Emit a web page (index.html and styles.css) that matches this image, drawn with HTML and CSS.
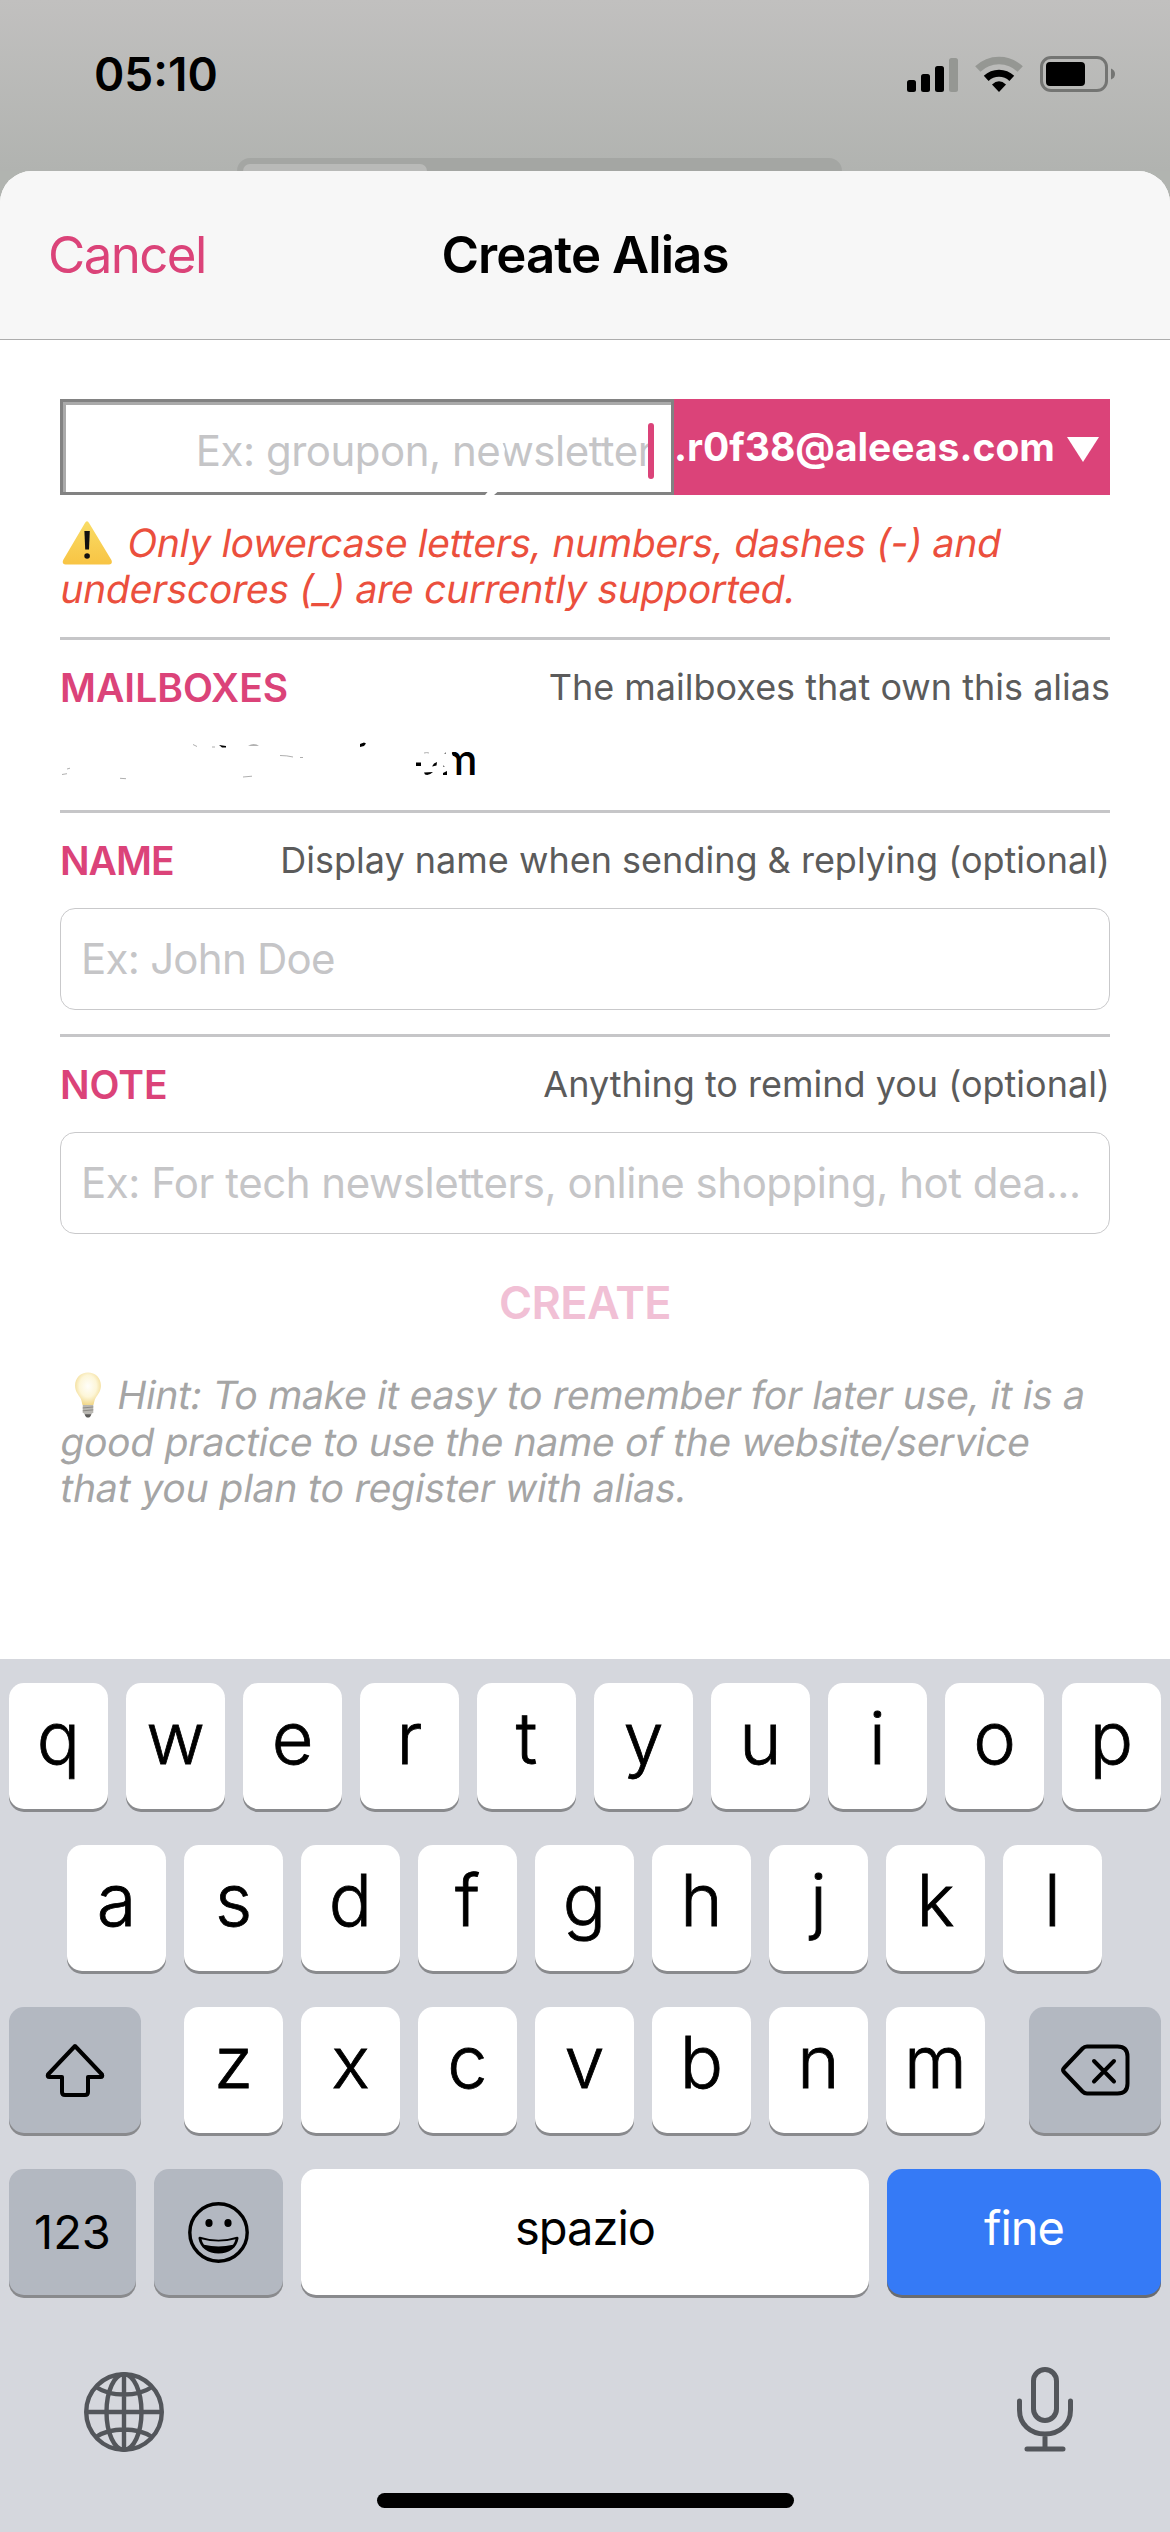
FILE: index.html
```html
<!DOCTYPE html>
<html lang="en">
<head>
<meta charset="utf-8">
<title>Create Alias</title>
<link rel="stylesheet" href="styles.css">
</head>
<body>
<div class="screen">
  <header class="status">
    <span class="clock">05:10</span>
    <div class="status-icons">
      <svg class="signal" width="51" height="36" viewBox="0 0 51 36">
        <rect x="0" y="24" width="9" height="12" rx="2.5"/>
        <rect x="14" y="18" width="9" height="18" rx="2.5"/>
        <rect x="28" y="10" width="9" height="26" rx="2.5"/>
        <rect x="42" y="2" width="9" height="34" rx="2.5" fill="#959793"/>
      </svg>
      <svg class="wifi" width="48" height="36" viewBox="0 0 48 36">
        <path d="M2.800 13.100a30.500 30.500 0 0 1 42.400 0" fill="none" stroke="#959793" stroke-width="7.600"/>
        <path d="M11.200 22.400a18.600 18.600 0 0 1 25.600 0" fill="none" stroke="#000" stroke-width="7"/>
        <path d="M24 36 17 28.600q7-6.600 14 0z"/>
      </svg>
      <svg class="battery" width="76" height="38" viewBox="0 0 76 38">
        <rect x="1.500" y="2.500" width="65" height="33" rx="9.500" fill="none" stroke="#747573" stroke-width="3"/>
        <rect x="6" y="7" width="39" height="24" rx="4"/>
        <path d="M71 13.500q4 1.500 4 5.500t-4 5.500z" fill="#747573"/>
      </svg>
    </div>
    <div class="segmented"><div class="segment"></div></div>
  </header>

  <main class="sheet">
    <nav class="navbar">
      <span class="cancel">Cancel</span>
      <h1 class="title">Create Alias</h1>
    </nav>

    <div class="form">
      <div class="alias">
        <div class="prefix">
          <span>Ex: groupon, newsletter</span>
          <i class="caret"></i>
          <svg class="scratch" width="60" height="96" viewBox="0 0 60 96"><path d="M40 96h9l4-3.500H43zM56 40l4 10-1 8-3-6z" fill="#fff"/></svg>
        </div>
        <div class="suffix">
          <span>.r0f38@aleeas.com</span>
          <svg width="32" height="25" viewBox="0 0 32 25"><path d="M0 0h32L16 25z" fill="#fff"/></svg>
        </div>
      </div>

      <p class="warning">
        <svg class="warn-icon" width="51" height="46" viewBox="0 0 51 46">
          <defs><linearGradient id="wg" x1="0" y1="0" x2="0" y2="1"><stop offset="0" stop-color="#f9dc66"/><stop offset="1" stop-color="#f8c444"/></linearGradient></defs>
          <path d="M22.800 3.200q2.200-4 4.400 0L49.400 40q1.600 4-2.400 4.400H3.600Q-.4 44 1.200 40z" fill="url(#wg)"/>
          <path d="M22.400 11h5.400l-.8 18.500h-3.800z" fill="#111"/><circle cx="25.100" cy="36" r="2.800" fill="#111"/>
        </svg>
        <span class="slant w1">Only lowercase letters, numbers, dashes (-) and</span>
        <span class="slant w2">underscores (_) are currently supported.</span>
      </p>

      <section class="field">
        <div class="row"><b>MAILBOXES</b><span>The mailboxes that own this alias</span></div>
        <div class="mailbox">
          <span>om</span>
          <svg class="scribble" width="420" height="50" viewBox="50 740 420 50">
            <path d="M405 740h46l1 14 4 8v22h-51z" fill="#fff"/>
            <g fill="#000">
              <path d="M219 745l7 1v1.500h-4zM360 747v-3l4-1.500 2 1-2 2.500zM416 762.500h5v3.500h-5zM437 762l-.5 3.500-4.500 1 2-3zM424 772.500l9-.5q-4 4-8 2.500zM443 766.500v-1l2 1zM443 773l4-2v4h-4zM444 753.500l2-1v1z"/>
              <path d="M248 745.500q6-2 11 0z" opacity=".6"/>
            </g>
            <g fill="none" stroke="#999" stroke-width=".8">
              <path d="M62 774.500l5-.8M67 769l3-.8M120 778.300l6 .4M193 744.500l4 2M212 747h3M280 755.500q7 0 13 1.500M300 757.500h3M424 753q3-.8 5 0M243 777l9-.8"/>
            </g>
          </svg>
        </div>
      </section>

      <section class="field">
        <div class="row"><b class="name">NAME</b><span>Display name when sending &amp; replying (optional)</span></div>
        <div class="input john">Ex: John Doe</div>
      </section>

      <section class="field">
        <div class="row"><b>NOTE</b><span>Anything to remind you (optional)</span></div>
        <div class="input">Ex: For tech newsletters, online shopping, hot dea...</div>
      </section>

      <div class="create">CREATE</div>

      <p class="hint">
        <svg class="bulb" width="28" height="48" viewBox="0 0 28 48">
          <defs><radialGradient id="bg" cx=".5" cy=".42" r=".6"><stop offset="0" stop-color="#fffefa"/><stop offset=".55" stop-color="#fdf6d8"/><stop offset="1" stop-color="#f0d584"/></radialGradient></defs>
          <path d="M14 .5C6.500.5.5 6 .5 14c0 6 3 9 5.500 13 1.800 3 1.800 7 2.500 7.500h11c.7-.5.7-4.500 2.500-7.500 2.500-4 5.500-7 5.500-13C27.500 6 21.500.5 14 .5z" fill="url(#bg)"/>
          <path d="M8.500 34.500h11V42l-3 3h-5l-3-3z" fill="#b9b7b2"/>
          <path d="M8.500 37.500l11-1M8.500 40.500l11-1" stroke="#8b8984" stroke-width="1"/>
          <path d="M10.500 44h7q-1 3.500-3.500 3.500T10.500 44z" fill="#5e5d5b"/>
        </svg>
        <span class="slant h1">Hint: To make it easy to remember for later use, it is a</span>
        <span class="slant h2">good practice to use the name of the website/service</span>
        <span class="slant h3">that you plan to register with alias.</span>
      </p>
    </div>
  </main>

  <div class="keyboard">
    <div class="keys">
      <span class="key">q</span><span class="key">w</span><span class="key">e</span><span class="key">r</span><span class="key">t</span><span class="key">y</span><span class="key">u</span><span class="key">i</span><span class="key">o</span><span class="key">p</span>
    </div>
    <div class="keys middle">
      <span class="key">a</span><span class="key">s</span><span class="key">d</span><span class="key">f</span><span class="key">g</span><span class="key">h</span><span class="key">j</span><span class="key">k</span><span class="key">l</span>
    </div>
    <div class="keys third">
      <span class="key dark shift">
        <svg width="60" height="54" viewBox="0 0 60 54"><path d="M30 3 57 31.500q1 2.500-1.500 2.500H43v15q0 3-3 3H20q-3 0-3-3V34H4.500Q2 34 3 31.500z" fill="none" stroke="#000" stroke-width="4" stroke-linejoin="round"/></svg>
      </span>
      <span class="key">z</span><span class="key">x</span><span class="key">c</span><span class="key">v</span><span class="key">b</span><span class="key">n</span><span class="key">m</span>
      <span class="key dark delete">
        <svg width="69" height="52" viewBox="0 0 69 52"><path d="M26 2.500h30.500q10 0 10 10v27q0 10-10 10H26q-2.500 0-4.500-2L3 28q-2-2 0-4L21.500 4.500q2-2 4.500-2zM33 17l20 20.500M53 17 33 37.500" fill="none" stroke="#000" stroke-width="4" stroke-linecap="round" stroke-linejoin="round"/></svg>
      </span>
    </div>
    <div class="keys fourth">
      <span class="key dark num">123</span>
      <span class="key dark emoji">
        <svg width="61" height="61" viewBox="0 0 61 61"><circle cx="30.500" cy="30.500" r="28.700" fill="none" stroke="#000" stroke-width="3.400"/><ellipse cx="21" cy="21" rx="3.600" ry="4"/><ellipse cx="40" cy="21" rx="3.600" ry="4"/><path d="M12 34.800q18.500 6 37 0 1.700-.3 1.500 1.700C49 46 41 51.500 30.500 51.500S12 46 10.500 36.500q-.2-2 1.500-1.700z"/><path d="M13.500 37.200q17 4.600 34 0-.8 3.500-2.500 5.500-14.500 3.500-29 0-1.700-2-2.500-5.500z" fill="#b3b8c1"/></svg>
      </span>
      <span class="key space">spazio</span>
      <span class="key done">fine</span>
    </div>
    <div class="dock">
      <svg width="80" height="80" viewBox="0 0 80 80" fill="none" stroke="#53565b" stroke-width="4.400"><circle cx="40" cy="40" r="37.800"/><ellipse cx="40" cy="40" rx="17.500" ry="37.800"/><path d="M40 2v76M2 40h76M12 15q11 7.500 28 7.500T68 15M12 65q11-7.500 28-7.500T68 65"/></svg>
      <svg class="mic" width="56" height="85" viewBox="0 0 56 85" fill="none" stroke="#53565b" stroke-width="5" stroke-linecap="round"><rect x="16.500" y="2.500" width="23" height="51" rx="11.500"/><path d="M2.500 34v9C2.500 57 13 67 28 67s25.500-10 25.500-24v-9M28 67v15M10 82h36"/></svg>
    </div>
    <div class="home"></div>
  </div>
</div>
</body>
</html>
```
FILE: styles.css
```css
* { box-sizing: border-box; margin: 0; padding: 0; }
body { background: #fff; }
svg { display: block; flex: none; }
.screen {
  width: 1170px; height: 2532px; overflow: hidden;
  display: flex; flex-direction: column;
  font-family: Inter, "Liberation Sans", sans-serif; color: #000;
  background: #b1b4b0;
}

.status {
  position: relative; height: 171px; padding: 0 54px 23px 94px;
  display: flex; justify-content: space-between; align-items: center;
  background: linear-gradient(#c1c0bf, #b1b3b0);
}
.clock { font-size: 46px; font-weight: 600; }
.status-icons { display: flex; align-items: center; }
.signal { margin-right: 17px; }
.wifi { margin-right: 17px; }
.segmented {
  position: absolute; left: 237px; bottom: 0; width: 605px; height: 13px;
  padding: 6px 6px 0; border-radius: 24px 24px 0 0; background: #a4a6a3;
}
.segment { width: 184px; height: 7px; border-radius: 18px 18px 0 0; background: #b9bab8; }

.sheet {
  height: 1488px; background: #fff; border-radius: 32px 32px 0 0;
  overflow: hidden;
}
.navbar {
  height: 169px; background: #f7f7f7; border-bottom: 1px solid #adadad;
  display: grid; grid-template-columns: 1fr auto 1fr; align-items: center;
  padding: 0 47px 2px; font-size: 51px;
}
.cancel { padding-left: 1px; color: #db4379; letter-spacing: -1.6px; }
.title { font-size: 51px; font-weight: 600; letter-spacing: -.93px; }

.form { padding: 59px 60px 0; }
.alias { display: flex; height: 96px; }
.prefix {
  position: relative; width: 614px; padding: 7px 18px 0 0;
  display: flex; align-items: center; justify-content: flex-end;
  border: 3px solid #828282; box-shadow: inset 3px 3px #aaa;
  font-size: 42px; letter-spacing: -.5px; color: #c5c5c7;
}
.caret {
  position: absolute; right: 17px; top: 21px; width: 6px; height: 56px;
  border-radius: 3px; background: #db4379;
}
.scratch { position: absolute; left: 382px; top: -3px; }
.suffix {
  flex: 1; padding: 0 11px 1px 0; display: flex; align-items: center;
  justify-content: space-between; background: #db4379;
  font-size: 39px; font-weight: 700; color: #fff;
}
.suffix svg { margin-top: 6px; }

.slant {
  display: block; white-space: nowrap;
  transform: translateX(-1.5px) skewX(-10deg); transform-origin: 0 37px;
}
.warning {
  display: grid; grid-template-columns: 67px 1fr; margin-top: 25px;
  font-size: 39px; line-height: 46px; letter-spacing: -.25px; color: #eb4f3d;
}
.warn-icon { margin-left: 2px; }
.w2, .h2, .h3 { grid-column: 1 / -1; }

.field { margin-top: 24px; border-top: 3px solid #c6c6c8; padding-top: 23px; }
.warning + .field { margin-top: 25px; }
.row { display: flex; justify-content: space-between; align-items: center; height: 48px; }
.row b { font-size: 39px; font-weight: 600; color: #db4379; }
.row .name { letter-spacing: -1px; }
.row span { font-size: 36px; color: #5b5b5b; }
.mailbox {
  position: relative; height: 99px; margin-bottom: -24px; padding-left: 355px;
  font-size: 42px; font-weight: 500; line-height: 98px;
}
.scribble { position: absolute; left: -10px; top: 29px; }
.input {
  height: 102px; margin-top: 24px; padding-left: 20px; line-height: 99px;
  border: 1px solid #c9c9cb; border-radius: 15px; white-space: nowrap;
  font-size: 42px; letter-spacing: -.47px; color: #c5c5c7;
}
.john { letter-spacing: -.74px; }
.create {
  margin-top: 45px; line-height: 48px; text-align: center;
  font-size: 45px; font-weight: 600; letter-spacing: -.6px; color: #f1c0d5;
}
.hint {
  display: grid; grid-template-columns: 57px 1fr; margin-top: 45px;
  font-size: 39px; line-height: 46.5px; letter-spacing: -.24px; color: #a5a5a5;
}
.h2 { letter-spacing: -.27px; }
.h3 { letter-spacing: -.1px; }
.bulb { margin-left: 14px; height: 46px; overflow: visible; }

.keyboard {
  height: 873px; padding: 24px 9px 0; background: #d5d7dd;
  display: flex; flex-direction: column; gap: 36px;
}
.keys { display: flex; gap: 18px; height: 126px; flex: none; }
.key {
  flex: 1; height: 126px; padding-bottom: 18px; border-radius: 15px;
  display: flex; align-items: center; justify-content: center;
  background: #fff; box-shadow: 0 3px #898a8d;
  font-size: 72px; font-weight: 300; -webkit-text-stroke: .8px currentColor;
}
.middle { padding: 0 59px 0 58px; }
.dark { background: #b3b8c1; padding-bottom: 0; }
.shift { flex: none; width: 132px; margin-right: 25px; }
.delete { flex: none; width: 132px; margin-left: 26px; }
.num, .space, .done { font-size: 47px; font-weight: 400; -webkit-text-stroke: 0; }
.num { flex: 0 0 127px; padding-bottom: 2px; }
.emoji { flex: 0 0 129px; }
.space, .done { letter-spacing: -1px; padding-bottom: 10px; }
.done { flex: 0 0 274px; background: #357af6; color: #fff; box-shadow: 0 3px #6a6c70; }
.dock {
  display: flex; justify-content: space-between; align-items: center;
  height: 80px; margin-top: 41px; padding: 0 88px 0 75px; flex: none;
}
.mic { margin-top: -6px; }
.home { width: 417px; height: 15px; margin: 5px auto 0; border-radius: 8px; background: #000; }
```
